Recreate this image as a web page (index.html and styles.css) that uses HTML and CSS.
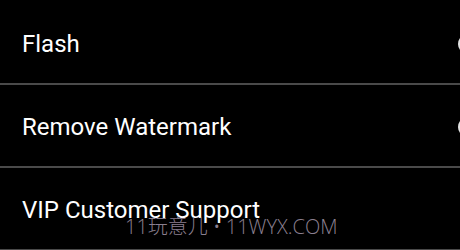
FILE: index.html
```html
<!DOCTYPE html>
<html>
<head>
<meta charset="utf-8">
<link rel="stylesheet" href="styles.css">
</head>
<body>
<div class="list">
  <div class="row">
    <span class="label">Flash</span>
    <span class="thumb"></span>
  </div>
  <div class="row">
    <span class="label">Remove Watermark</span>
    <span class="thumb"></span>
  </div>
  <div class="row">
    <span class="label">VIP Customer Support</span>
  </div>
</div>
<div class="watermark">11玩意儿 • 11WYX.COM</div>
</body>
</html>
```
FILE: styles.css
```css
html, body {
  margin: 0;
  padding: 0;
  background: #000;
  width: 460px;
  height: 250px;
  overflow: hidden;
  position: relative;
}
.list {
  padding-top: 2px;
  display: flex;
  flex-direction: column;
}
.row {
  height: 78px;
  border-bottom: 2px solid #4a4a4a;
  display: flex;
  align-items: center;
  justify-content: space-between;
  padding: 3px 0 0 22px;
  position: relative;
}
.label {
  font-family: Roboto, "Liberation Sans", sans-serif;
  font-size: 24px;
  line-height: 28px;
  color: #fff;
}
.thumb {
  width: 20px;
  height: 20px;
  border-radius: 50%;
  background: #e2e2e2;
  margin-right: -18px;
  flex: none;
}
.watermark {
  position: absolute;
  left: 125px;
  top: 214px;
  font-family: "Open Sans", "Noto Sans CJK SC", sans-serif;
  font-weight: 300;
  font-size: 20px;
  line-height: 26px;
  color: #8a7f8f;
  white-space: nowrap;
}
```
